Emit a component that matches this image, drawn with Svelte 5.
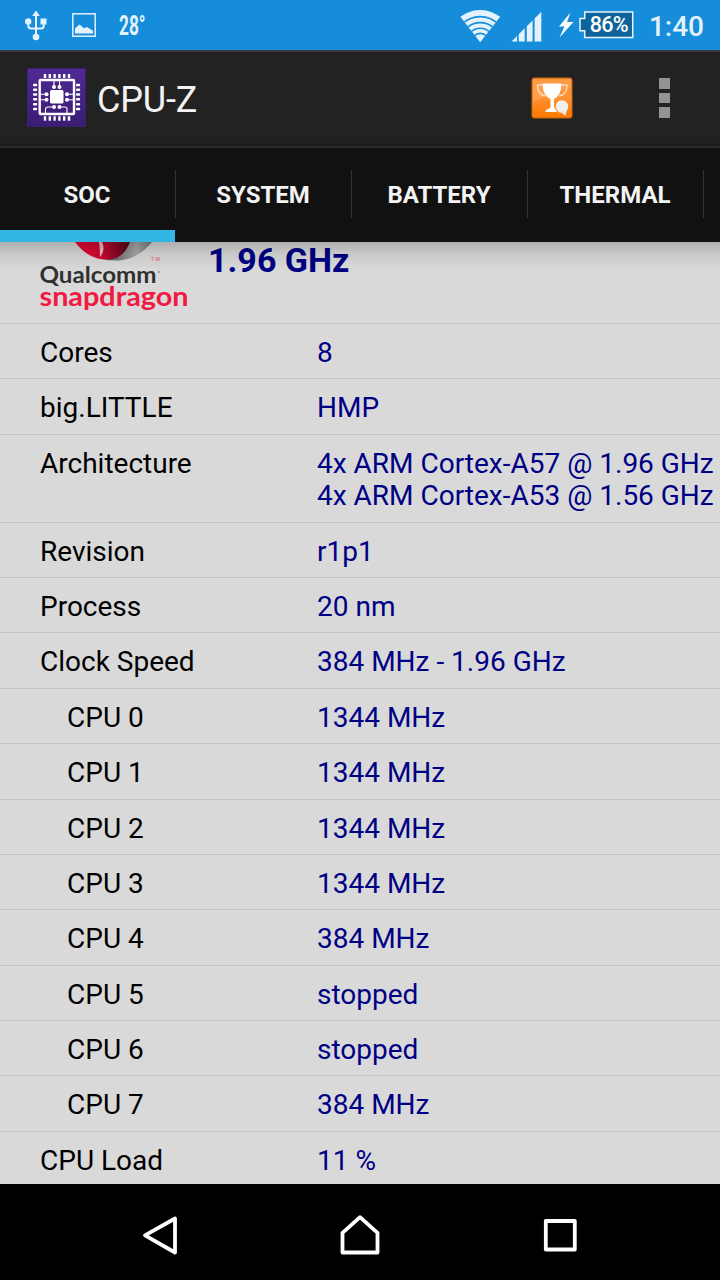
<script>
    // --- Status bar ---
    const temperature = '28°';
    const battery = '86%';
    const time = '1:40';

    // --- Tabs ---
    const tabs = ['SOC', 'SYSTEM', 'BATTERY', 'THERMAL'];
    let activeTab = $state('SOC');

    // --- SOC data ---
    const maxSpeed = '1.96 GHz';
    const rows = [
        { label: 'Cores', values: ['8'] },
        { label: 'big.LITTLE', values: ['HMP'] },
        { label: 'Architecture', values: ['4x ARM Cortex-A57 @ 1.96 GHz', '4x ARM Cortex-A53 @ 1.56 GHz'] },
        { label: 'Revision', values: ['r1p1'] },
        { label: 'Process', values: ['20 nm'] },
        { label: 'Clock Speed', values: ['384 MHz - 1.96 GHz'] },
        { label: 'CPU 0', values: ['1344 MHz'], nested: true },
        { label: 'CPU 1', values: ['1344 MHz'], nested: true },
        { label: 'CPU 2', values: ['1344 MHz'], nested: true },
        { label: 'CPU 3', values: ['1344 MHz'], nested: true },
        { label: 'CPU 4', values: ['384 MHz'], nested: true },
        { label: 'CPU 5', values: ['stopped'], nested: true },
        { label: 'CPU 6', values: ['stopped'], nested: true },
        { label: 'CPU 7', values: ['384 MHz'], nested: true },
        { label: 'CPU Load', values: ['11 %'] }
    ];

    // Offsets of the pins along each side of the chip icon
    const pins = [17, 21.8, 26.6, 31.4, 36.2, 41];
</script>

<div class="screen">
    <header class="status-bar">
        <div class="notifications">
            <svg class="usb" width="22" height="32" viewBox="0 0 22 32" fill="none" stroke="#e3f2fc" stroke-width="2">
                <path d="M11 4v22M3.200 12v3.500q0 3 3 3h9.600q3 0 3-3V12" />
                <path d="M11 .5l3.800 5.500H7.200zM15.500 8.500h6v6h-6z" fill="#e3f2fc" stroke="none" />
                <circle cx="3.2" cy="11.5" r="3.2" fill="#e3f2fc" stroke="none" />
                <circle cx="11" cy="27" r="3.3" fill="#e3f2fc" stroke="none" />
            </svg>
            <svg class="picture" width="24" height="24" viewBox="0 0 24 24">
                <rect x=".8" y=".8" width="22.4" height="22.4" fill="none" stroke="#e3f2fc" stroke-width="1.5" />
                <path d="M3 20.500V15.500l4.500-4 4.500 3.800 3-1.300 6 3.800v2.700z" fill="#e3f2fc" />
            </svg>
            <span class="temperature">{temperature}</span>
        </div>
        <div class="indicators">
            <svg class="wifi" width="40" height="34" viewBox="0 0 40 34">
                <clipPath id="fan"><path d="M20.200 33.300L-2 4.800V0h44.400v4.800z" /></clipPath>
                <g clip-path="url(#fan)">
                    <circle cx="20.2" cy="33" r="32" fill="#e3f2fc" />
                    <g fill="none" stroke="#158ddb" stroke-width="1.6">
                        <circle cx="20.2" cy="33" r="8.6" />
                        <circle cx="20.2" cy="33" r="13.8" />
                        <circle cx="20.2" cy="33" r="19.4" />
                        <circle cx="20.2" cy="33" r="25.4" />
                    </g>
                </g>
            </svg>
            <svg class="signal" width="31" height="31" viewBox="0 0 31 31" fill="#e3f2fc">
                <path d="M.5 30.500L6 25v5.500zM7.700 23.300l6-6v13.200h-6zM15.800 15.200l5.800-5.800v21.100h-5.800zM23.600 7.400L30.300.7v29.800h-6.700z" />
            </svg>
            <svg class="bolt" width="16" height="26" viewBox="0 0 16 26">
                <path d="M12.500.5L1 14.500h5.500L1.500 25.500 15.500 10H9z" fill="#fff" />
            </svg>
            <div class="battery">
                <svg width="55" height="28" viewBox="0 0 55 28">
                    <path d="M5.700 1h48v25.600h-48v-6.800H1V7.500h4.700z" fill="#0e639a" stroke="#e9f5fc" stroke-width="1.5" />
                </svg>
                <span>{battery}</span>
            </div>
            <span class="clock">{time}</span>
        </div>
    </header>

    <div class="action-bar">
        <svg class="chip" width="60" height="60" viewBox="0 0 60 60">
            <defs>
                <linearGradient id="chip-bg" x1="0" y1="0" x2="0" y2="1">
                    <stop offset="0" stop-color="#4f2a95" />
                    <stop offset="1" stop-color="#3a1c72" />
                </linearGradient>
            </defs>
            <rect x=".5" y=".5" width="58" height="58" fill="url(#chip-bg)" stroke="#3b2070" />
            <g fill="#fff">
                {#each pins as pin}
                    <rect x={pin - .2} y="6" width="2.4" height="4" />
                    <rect x={pin - .2} y="48.3" width="2.4" height="4.4" />
                    <rect x="6" y={pin - 1.3} width="4.2" height="2.5" rx="1" />
                    <rect x="49" y={pin - 1.3} width="4.2" height="2.5" rx="1" />
                {/each}
                <rect x="23" y="22" width="13.5" height="13.5" rx="1.5" />
                <circle cx="27" cy="19" r="2" /><circle cx="32.5" cy="19" r="2" />
                <circle cx="27" cy="39" r="2" /><circle cx="32.5" cy="39" r="2" />
                <circle cx="19.5" cy="26.3" r="2" /><circle cx="19.5" cy="31.7" r="2" />
                <circle cx="40" cy="26.3" r="2" /><circle cx="40" cy="31.7" r="2" />
            </g>
            <g fill="none" stroke="#fff">
                <rect x="12.7" y="12" width="34.3" height="34" rx="1" stroke-width="2.4" />
                <path d="M27 13v6M32.500 13v6M13 26.300h6M13 31.700h6M41 26.300h6M41 31.700h6M27 39h-6q-2.500 0-2.500 2.500V46M32.500 39h5.500q2 0 2 2V46" stroke-width="1.1" />
            </g>
        </svg>
        <h1>CPU-Z</h1>
        <button class="trophy" aria-label="Ranking">
            <svg width="42" height="42" viewBox="0 0 42 42">
                <defs>
                    <linearGradient id="trophy-bg" x1="0" y1="0" x2="0" y2="1">
                        <stop offset="0" stop-color="#fb8c24" />
                        <stop offset=".45" stop-color="#ff9436" />
                        <stop offset="1" stop-color="#fb7900" />
                    </linearGradient>
                </defs>
                <rect x="1" y="1" width="40" height="40" rx="2" fill="url(#trophy-bg)" stroke="#c9670f" />
                <path d="M2 2h38v9Q20 13 2 26z" fill="#fff" opacity=".13" />
                <path d="M12 8H6.500q0 10 8 11M30 8h6q0 10-8 11" fill="none" stroke="#fbd9bd" stroke-width="1.5" />
                <path d="M11.500 6.500h19q0 11.500-7.500 15.500v8l3 5H14.500v-1.500l5-3V22q-8-4-8-15.500z" fill="#fff" />
                <circle cx="31" cy="29.5" r="6.3" fill="#f3efec" />
                <path d="M29 34h6.500l-1 5-2-1.700z" fill="#eee5df" />
            </svg>
        </button>
        <button class="overflow" aria-label="More options">
            <i></i><i></i><i></i>
        </button>
    </div>

    <nav class="tabs">
        {#each tabs as tab}
            <button class="tab" class:active={tab === activeTab} onclick={() => (activeTab = tab)}>{tab}</button>
        {/each}
    </nav>

    <main>
        <section class="soc">
            <!-- Scrolled under the tabs, so only the bottom of the ball is visible -->
            <svg class="logo" width="150" height="72" viewBox="0 0 150 72">
                <defs>
                    <linearGradient id="ball-red" x1="0" y1="0" x2="1" y2="0">
                        <stop offset="0" stop-color="#ee0a35" />
                        <stop offset=".5" stop-color="#cc0730" />
                        <stop offset="1" stop-color="#4e0715" />
                    </linearGradient>
                    <linearGradient id="ball-grey" x1="0" y1="0" x2="1" y2="0">
                        <stop offset=".5" stop-color="#707070" />
                        <stop offset=".8" stop-color="#aaa" />
                        <stop offset="1" stop-color="#777" />
                    </linearGradient>
                </defs>
                <path d="M38 0h74Q98 17 79 18.500 52 20 38 0z" fill="url(#ball-grey)" />
                <path d="M35 0h55Q84 16 70 17.500 49 19 35 0z" fill="url(#ball-red)" />
                <path d="M59 0h3q4 8-2 15 0-9-1-15z" fill="#e9b9bf" />
                <text x="111" y="18.5" font-size="5" font-weight="700" fill="#e5838f" textLength="9">TM</text>
                <text class="brand" x="-.5" y="40.5" font-size="22.5" fill="#303030" textLength="117" lengthAdjust="spacingAndGlyphs">Qualcomm</text>
                <circle cx="119" cy="30" r=".9" fill="#888" />
                <text class="brand" x="-.5" y="64" font-size="27" fill="#f2183f" textLength="149" lengthAdjust="spacingAndGlyphs">snapdragon</text>
            </svg>
            <strong>{maxSpeed}</strong>
        </section>

        {#each rows as row}
            <div class="row" class:nested={row.nested}>
                <span class="label">{row.label}</span>
                <div class="value">
                    {#each row.values as value}
                        <div>{value}</div>
                    {/each}
                </div>
            </div>
        {/each}
    </main>

    <footer>
        <button aria-label="Back">
            <svg width="40" height="44" viewBox="0 0 40 44"><path d="M35 5.500v34L5 22.300z" /></svg>
        </button>
        <button aria-label="Home">
            <svg width="44" height="44" viewBox="0 0 44 44"><path d="M22 4.200L39.500 19.800V39.500h-35V19.800z" /></svg>
        </button>
        <button aria-label="Recent apps">
            <svg width="40" height="44" viewBox="0 0 40 44"><path d="M5.800 8h29v28.500h-29z" /></svg>
        </button>
    </footer>
</div>

<style>
    :global(body) {
        margin: 0;
        background: #000;
    }

    .screen {
        display: flex;
        flex-direction: column;
        width: 720px;
        height: 1280px;
        overflow: hidden;
        font-family: Roboto, sans-serif;
        background: #d9d9d9;
    }

    button {
        padding: 0;
        border: none;
        background: none;
        font-family: inherit;
    }

    svg {
        display: block;
        flex: none;
    }

    .status-bar {
        display: flex;
        flex: none;
        justify-content: space-between;
        height: 50px;
        background: #158ddb;
        color: #e3f2fc;
    }

    .notifications,
    .indicators {
        display: flex;
        align-items: center;
    }

    .notifications {
        padding-left: 25px;
    }

    .usb {
        margin-top: 2px;
    }

    .picture {
        margin-left: 25px;
    }

    .temperature {
        margin: 2px 0 0 23px;
        font-size: 27px;
        font-weight: 700;
        transform: scaleX(.64);
        transform-origin: left;
    }

    .indicators {
        padding-right: 16px;
    }

    .wifi {
        margin-top: 2px;
    }

    .signal {
        margin: 2px 0 0 11px;
    }

    .bolt {
        margin-left: 16px;
    }

    .battery {
        position: relative;
        margin-left: 5px;
    }

    .battery span {
        position: absolute;
        inset: 0 0 0 5px;
        font-size: 21.5px;
        font-weight: 500;
        letter-spacing: -.6px;
        line-height: 28px;
        text-align: center;
        color: #fff;
    }

    .clock {
        margin: 3px 0 0 15px;
        font-size: 28px;
        font-weight: 500;
        line-height: 50px;
    }

    .action-bar {
        display: flex;
        flex: none;
        align-items: center;
        box-sizing: border-box;
        height: 98px;
        padding: 0 50px 2px 27px;
        border-top: 2px solid #3a3a3a;
        border-bottom: 2px solid #2d2d2d;
        background: linear-gradient(#222 90px, #191919);
    }

    h1 {
        margin: 4px auto 0 10px;
        font-size: 36px;
        font-weight: 400;
        letter-spacing: -.2px;
        line-height: 42px;
        color: #f3f3f3;
    }

    .trophy {
        margin-right: 86px;
    }

    .overflow {
        display: flex;
        flex-direction: column;
        gap: 4px;
    }

    .overflow i {
        width: 11px;
        height: 10.500px;
        background: #939393;
    }

    .tabs {
        display: flex;
        flex: none;
        height: 94px;
        background: #111;
    }

    .tab {
        position: relative;
        width: 176px;
        padding-right: 2px;
        font-size: 24px;
        font-weight: 700;
        color: #f3f3f3;
    }

    .tab::after {
        content: '';
        position: absolute;
        top: 22px;
        right: 0;
        width: 1px;
        height: 48px;
        background: #333;
    }

    .tab.active {
        box-shadow: inset -1px 0 #111, inset 0 -12px #33b5e5;
    }

    main {
        position: relative;
        flex: 1;
        overflow: hidden;
    }

    /* Shadow of the tab bar over the list */
    main::before {
        content: '';
        position: absolute;
        inset: 0 0 auto;
        height: 28px;
        background: linear-gradient(rgba(0, 0, 0, .2), rgba(0, 0, 0, .08) 40%, transparent);
    }

    .soc {
        display: flex;
        box-sizing: border-box;
        height: 82px;
        padding-left: 40px;
        border-bottom: 1px solid #c2c2c2;
    }

    .brand {
        font-family: Lato, sans-serif;
        font-weight: 700;
    }

    .soc strong {
        margin-left: 18px;
        font-size: 34px;
        line-height: 36px;
        color: #000084;
    }

    .row {
        display: flex;
        box-sizing: border-box;
        padding: 13px 0 8.600px 40px;
        border-bottom: 1px solid #c2c2c2;
        font-size: 28px;
        line-height: 32.75px;
        color: #000;
        white-space: nowrap;
    }

    .label {
        width: 277px;
    }

    .nested {
        padding-left: 67px;
    }

    .nested .label {
        width: 250px;
    }

    .value {
        color: #000084;
    }

    footer {
        display: flex;
        flex: none;
        align-items: center;
        justify-content: center;
        gap: 158px;
        box-sizing: border-box;
        height: 96px;
        padding-top: 6px;
        background: #000;
    }

    footer svg {
        fill: none;
        stroke: #fff;
        stroke-width: 3.8;
        stroke-linejoin: round;
    }
</style>
